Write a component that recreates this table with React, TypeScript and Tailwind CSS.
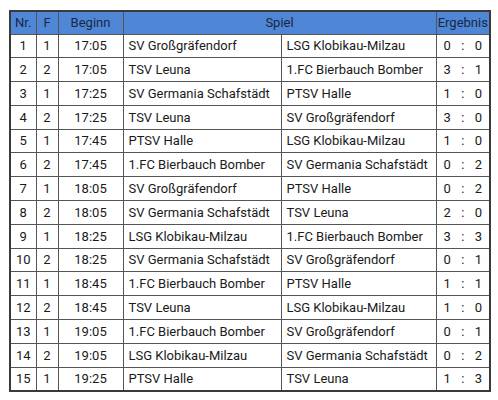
import React from 'react';

type Match = [number, number, string, string, string, number, number];

const MATCHES: Match[] = [
  [1, 1, '17:05', 'SV Großgräfendorf', 'LSG Klobikau-Milzau', 0, 0],
  [2, 2, '17:05', 'TSV Leuna', '1.FC Bierbauch Bomber', 3, 1],
  [3, 1, '17:25', 'SV Germania Schafstädt', 'PTSV Halle', 1, 0],
  [4, 2, '17:25', 'TSV Leuna', 'SV Großgräfendorf', 3, 0],
  [5, 1, '17:45', 'PTSV Halle', 'LSG Klobikau-Milzau', 1, 0],
  [6, 2, '17:45', '1.FC Bierbauch Bomber', 'SV Germania Schafstädt', 0, 2],
  [7, 1, '18:05', 'SV Großgräfendorf', 'PTSV Halle', 0, 2],
  [8, 2, '18:05', 'SV Germania Schafstädt', 'TSV Leuna', 2, 0],
  [9, 1, '18:25', 'LSG Klobikau-Milzau', '1.FC Bierbauch Bomber', 3, 3],
  [10, 2, '18:25', 'SV Germania Schafstädt', 'SV Großgräfendorf', 0, 1],
  [11, 1, '18:45', '1.FC Bierbauch Bomber', 'PTSV Halle', 1, 1],
  [12, 2, '18:45', 'TSV Leuna', 'LSG Klobikau-Milzau', 1, 0],
  [13, 1, '19:05', '1.FC Bierbauch Bomber', 'SV Großgräfendorf', 0, 1],
  [14, 2, '19:05', 'LSG Klobikau-Milzau', 'SV Germania Schafstädt', 0, 2],
  [15, 1, '19:25', 'PTSV Halle', 'TSV Leuna', 1, 3],
];

const cell = 'border border-[#555] p-0';

export default function App() {
  return (
    <div className="bg-white w-[498px] h-[400px] pt-[10px] pl-[9px] font-['Roboto',sans-serif] text-[13px] text-[#1a1a1a]">
      <table className="table-fixed border-collapse border-2 border-[#3a3a3a] w-[480px]">
        <colgroup>
          <col className="w-[26px]" />
          <col className="w-[22px]" />
          <col className="w-[65px]" />
          <col className="w-[158px]" />
          <col className="w-[155px]" />
          <col className="w-[54px]" />
        </colgroup>
        <thead>
          <tr className="bg-[#4f86d6] h-[23px] text-[#1a2744]">
            <th className={`${cell} font-normal text-center`}>Nr.</th>
            <th className={`${cell} font-normal text-center`}>F</th>
            <th className={`${cell} font-normal text-center`}>Beginn</th>
            <th colSpan={2} className={`${cell} font-normal text-center`}>Spiel</th>
            <th className={`${cell} font-normal text-center`}>Ergebnis</th>
          </tr>
        </thead>
        <tbody>
          {MATCHES.map(([nr, f, time, home, away, a, b]) => (
            <tr key={nr} className="h-[23.8px]">
              <td className={`${cell} text-center`}>{nr}</td>
              <td className={`${cell} text-center`}>{f}</td>
              <td className={`${cell} text-center`}>{time}</td>
              <td className={`${cell} pl-[5px] whitespace-nowrap`}>{home}</td>
              <td className={`${cell} pl-[5px] whitespace-nowrap`}>{away}</td>
              <td className={cell}>
                <div className="flex justify-between px-[7px]">
                  <span>{a}</span>
                  <span>:</span>
                  <span>{b}</span>
                </div>
              </td>
            </tr>
          ))}
        </tbody>
      </table>
    </div>
  );
}
